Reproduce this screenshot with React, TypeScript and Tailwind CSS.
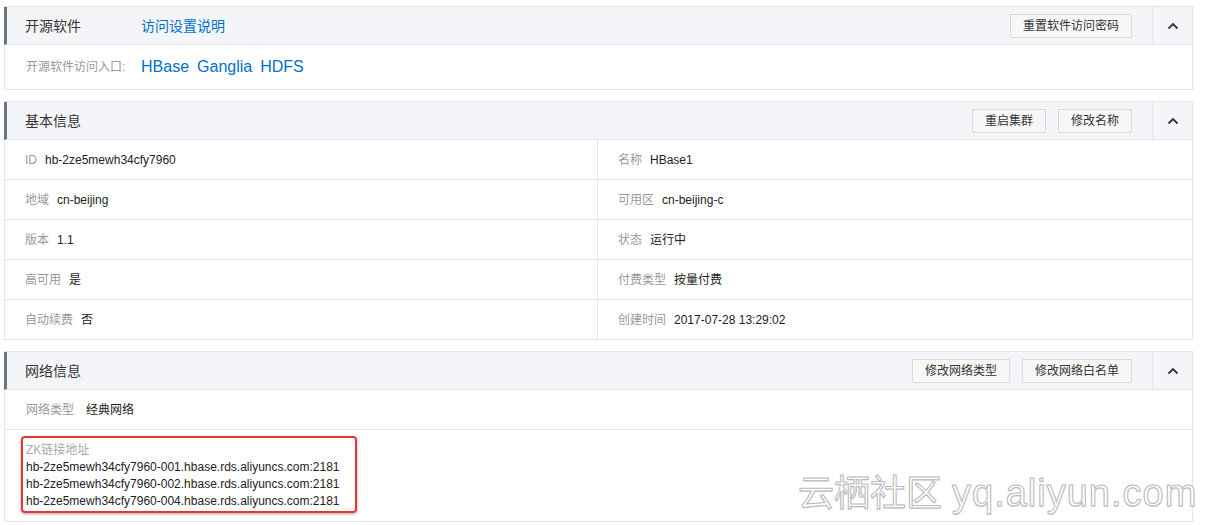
import React from "react";

const font = { fontFamily: '"Liberation Sans", "Noto Sans CJK SC", sans-serif' };

const Chevron = () => (
  <svg width="12" height="8" viewBox="0 0 12 8" fill="none">
    <path d="M1.5 6.5 L6 2 L10.5 6.5" stroke="#333" strokeWidth="1.8" />
  </svg>
);

const Btn: React.FC<{ children: React.ReactNode }> = ({ children }) => (
  <button className="h-[24px] px-[12px] border border-[#dcdcdc] bg-[#f7f7f7] text-[12px] text-[#333] leading-none">
    {children}
  </button>
);

const Header: React.FC<{ title: string; extra?: React.ReactNode; actions?: React.ReactNode }> = ({
  title,
  extra,
  actions,
}) => (
  <div className="flex h-[38px] bg-[#f4f5f9] border-l-[3px] border-l-[#6b7580] border-b border-b-[#e6e6e6]">
    <div className="flex-1 flex items-center pl-[18px] pr-[20px] pt-[1px]">
      <span className="text-[14px] text-[#333] w-[116px]">{title}</span>
      {extra}
      <div className="ml-auto flex items-center gap-[12px]">{actions}</div>
    </div>
    <div className="w-[40px] border-l border-l-[#e6e6e6] flex items-center justify-center pt-[1px]">
      <Chevron />
    </div>
  </div>
);

const Field: React.FC<{ label: string; value: string }> = ({ label, value }) => (
  <div className="flex items-center gap-[8px] text-[12px]">
    <span className="text-[#999]">{label}</span>
    <span className="text-[#222]">{value}</span>
  </div>
);

const rows: [string, string, string, string][] = [
  ["ID", "hb-2ze5mewh34cfy7960", "名称", "HBase1"],
  ["地域", "cn-beijing", "可用区", "cn-beijing-c"],
  ["版本", "1.1", "状态", "运行中"],
  ["高可用", "是", "付费类型", "按量付费"],
  ["自动续费", "否", "创建时间", "2017-07-28 13:29:02"],
];

export default function App() {
  return (
    <div className="relative w-[1206px] h-[525px] overflow-hidden bg-white" style={font}>
      <div className="w-[1189px] ml-[4px] pt-[6px] flex flex-col gap-[11px]">
        {/* 开源软件 */}
        <div className="border-t border-r border-b border-[#e6e6e6]">
          <Header
            title="开源软件"
            extra={<a className="text-[14px] text-[#0070cc]">访问设置说明</a>}
            actions={<Btn>重置软件访问密码</Btn>}
          />
          <div className="h-[44px] flex items-center pl-[21px] border-l border-l-[#e6e6e6]">
            <span className="text-[12px] text-[#999] w-[115px]">开源软件访问入口:</span>
            <div className="flex gap-[8px] text-[16px] text-[#0070cc]">
              <a>HBase</a>
              <a>Ganglia</a>
              <a>HDFS</a>
            </div>
          </div>
        </div>

        {/* 基本信息 */}
        <div className="border-t border-r border-[#e6e6e6]">
          <Header
            title="基本信息"
            actions={
              <>
                <Btn>重启集群</Btn>
                <Btn>修改名称</Btn>
              </>
            }
          />
          {rows.map(([l1, v1, l2, v2]) => (
            <div key={l1} className="h-[40px] flex border-l border-b border-[#e6e6e6]">
              <div className="w-[593px] flex items-center pl-[20px] border-r border-r-[#e6e6e6]">
                <Field label={l1} value={v1} />
              </div>
              <div className="flex-1 flex items-center pl-[20px]">
                <Field label={l2} value={v2} />
              </div>
            </div>
          ))}
        </div>

        {/* 网络信息 */}
        <div className="border-t border-r border-[#e6e6e6]">
          <Header
            title="网络信息"
            actions={
              <>
                <Btn>修改网络类型</Btn>
                <Btn>修改网络白名单</Btn>
              </>
            }
          />
          <div className="h-[40px] flex items-center gap-[12px] pl-[21px] border-l border-b border-[#e6e6e6] text-[12px]">
            <span className="text-[#999]">网络类型</span>
            <span className="text-[#222]">经典网络</span>
          </div>
          <div className="h-[92px] pl-[16px] pt-[6px] border-l border-b border-[#e6e6e6]">
            <div className="inline-block w-[336px] h-[77px] border-2 border-[#e8352f] rounded-[4px] shadow-[0_1px_3px_rgba(0,0,0,0.35)] pl-[3px] pt-[4px] text-[12px] leading-[17px]">
              <div className="text-[#aaa]">ZK链接地址</div>
              <div className="text-[#222]">hb-2ze5mewh34cfy7960-001.hbase.rds.aliyuncs.com:2181</div>
              <div className="text-[#222]">hb-2ze5mewh34cfy7960-002.hbase.rds.aliyuncs.com:2181</div>
              <div className="text-[#222]">hb-2ze5mewh34cfy7960-004.hbase.rds.aliyuncs.com:2181</div>
            </div>
          </div>
        </div>
      </div>

      {/* watermark */}
      <div className="absolute left-[798px] top-[471px] flex items-baseline gap-[10px] leading-[44px] text-white whitespace-nowrap [-webkit-text-stroke:1px_#b8b8b8] [text-shadow:0_1px_1px_rgba(0,0,0,0.15)]">
        <span className="text-[36px]">云栖社区</span>
        <span className="text-[38px] tracking-[1px]">yq.aliyun.com</span>
      </div>
    </div>
  );
}
